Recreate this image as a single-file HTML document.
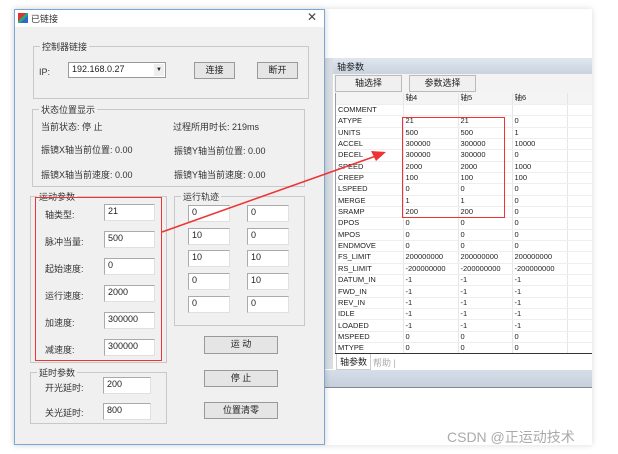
<!DOCTYPE html>
<html><head><meta charset="utf-8"><style>
*{margin:0;padding:0;box-sizing:border-box}
body{width:618px;height:454px;background:#fff;position:relative;overflow:hidden;font-family:"Liberation Sans","Noto Sans CJK SC",sans-serif;font-size:9px;color:#222}
.a{position:absolute}
.grp{position:absolute;border:1px solid #c8c8c8}
.grp span{position:absolute;top:-7px;left:6px;background:#f0f0f0;padding:0 2px;font-size:9px;color:#333}
.in{position:absolute;background:#fff;border:1px solid #aaa;border-right-color:#e0e0e0;border-bottom-color:#e0e0e0;font-size:9px;padding:1px 3px;height:17px}
.btn{position:absolute;background:#e5e5e5;border:1px solid #999;text-align:center;font-size:9px;line-height:15px}
.t{position:absolute;font-size:9px;color:#333;white-space:nowrap}
table{border-collapse:collapse}
td{height:11.35px;font-size:7.5px;padding:0 2px;border-right:1px solid #e6e6e6;border-bottom:1px solid #eee;white-space:nowrap;color:#222;line-height:10px}
</style></head><body>
<!-- right window -->
<div class="a" style="left:324px;top:9px;width:268px;height:436px;background:#fff;box-shadow:0 0 6px rgba(0,0,0,.15)"></div>
<div class="a" style="left:324px;top:58px;width:9px;height:311px;background:#d8dde4"></div>
<div class="a" style="left:333px;top:58px;width:259px;height:16px;background:linear-gradient(#dfe6ef,#c9d3df);font-size:9px;padding:2px 4px">轴参数</div>
<div class="a" style="left:334px;top:74px;width:258px;height:19px;background:#f3f3f3"></div>
<div class="btn" style="left:335px;top:75px;width:67px;height:17px;background:#f0f0f0;border-color:#bbb">轴选择</div>
<div class="btn" style="left:409px;top:75px;width:67px;height:17px;background:#f0f0f0;border-color:#bbb">参数选择</div>
<div class="a" style="left:335px;top:93px;width:257px;height:260px;overflow:hidden;border-left:1px solid #999">
<table style="width:300px">
<tr style="background:#f4f4f4"><td style="width:67px"></td><td style="width:55px">轴4</td><td style="width:54px">轴5</td><td style="width:55px">轴6</td><td></td></tr>
<tr><td>COMMENT</td><td></td><td></td><td></td><td></td></tr>
<tr><td>ATYPE</td><td>21</td><td>21</td><td>0</td><td></td></tr>
<tr><td>UNITS</td><td>500</td><td>500</td><td>1</td><td></td></tr>
<tr><td>ACCEL</td><td>300000</td><td>300000</td><td>10000</td><td></td></tr>
<tr><td>DECEL</td><td>300000</td><td>300000</td><td>0</td><td></td></tr>
<tr><td>SPEED</td><td>2000</td><td>2000</td><td>1000</td><td></td></tr>
<tr><td>CREEP</td><td>100</td><td>100</td><td>100</td><td></td></tr>
<tr><td>LSPEED</td><td>0</td><td>0</td><td>0</td><td></td></tr>
<tr><td>MERGE</td><td>1</td><td>1</td><td>0</td><td></td></tr>
<tr><td>SRAMP</td><td>200</td><td>200</td><td>0</td><td></td></tr>
<tr><td>DPOS</td><td>0</td><td>0</td><td>0</td><td></td></tr>
<tr><td>MPOS</td><td>0</td><td>0</td><td>0</td><td></td></tr>
<tr><td>ENDMOVE</td><td>0</td><td>0</td><td>0</td><td></td></tr>
<tr><td>FS_LIMIT</td><td>200000000</td><td>200000000</td><td>200000000</td><td></td></tr>
<tr><td>RS_LIMIT</td><td>-200000000</td><td>-200000000</td><td>-200000000</td><td></td></tr>
<tr><td>DATUM_IN</td><td>-1</td><td>-1</td><td>-1</td><td></td></tr>
<tr><td>FWD_IN</td><td>-1</td><td>-1</td><td>-1</td><td></td></tr>
<tr><td>REV_IN</td><td>-1</td><td>-1</td><td>-1</td><td></td></tr>
<tr><td>IDLE</td><td>-1</td><td>-1</td><td>-1</td><td></td></tr>
<tr><td>LOADED</td><td>-1</td><td>-1</td><td>-1</td><td></td></tr>
<tr><td>MSPEED</td><td>0</td><td>0</td><td>0</td><td></td></tr>
<tr><td>MTYPE</td><td>0</td><td>0</td><td>0</td><td></td></tr>
</table></div>
<div class="a" style="left:335px;top:353px;width:257px;height:1px;background:#333"></div>
<div class="a" style="left:336px;top:354px;font-size:9px;padding:1px 3px;background:#fff;border:1px solid #ccc;border-top:none">轴参数</div>
<div class="t" style="left:373px;top:356px;color:#aaa">帮助 |</div>
<div class="a" style="left:324px;top:370px;width:268px;height:18px;background:linear-gradient(#d5dde8,#c6d0dc);border-bottom:1px solid #888"></div>
<div class="a" style="left:402px;top:117px;width:103px;height:101px;border:1.5px solid #e33"></div>
<div class="t" style="left:447px;top:427px;font-size:14px;color:#aaa">CSDN @正运动技术</div>

<!-- dialog -->
<div class="a" style="left:14px;top:9px;width:311px;height:436px;background:#f0f0f0;border:1px solid #7aa7d6;box-shadow:0 0 6px rgba(0,0,0,.2)"></div>
<div class="a" style="left:15px;top:10px;width:309px;height:17px;background:#fff"></div>
<div class="a" style="left:18px;top:13px;width:10px;height:10px;background:linear-gradient(135deg,#d33 40%,#2a7 41%,#2a7 60%,#36c 61%)"></div>
<div class="t" style="left:31px;top:12px">已链接</div>
<div class="t" style="left:307px;top:10px;font-size:12px;color:#444">✕</div>

<div class="grp" style="left:33px;top:46px;width:276px;height:53px"><span>控制器链接</span></div>
<div class="t" style="left:39px;top:67px">IP:</div>
<div class="in" style="left:68px;top:62px;width:98px;height:16px;border:1px solid #999">192.168.0.27</div>
<div class="a" style="left:154px;top:64px;width:10px;height:12px;background:#eee;font-size:6px;text-align:center;line-height:12px">▼</div>
<div class="btn" style="left:194px;top:62px;width:41px;height:17px">连接</div>
<div class="btn" style="left:257px;top:62px;width:41px;height:17px">断开</div>

<div class="grp" style="left:32px;top:109px;width:273px;height:78px"><span>状态位置显示</span></div>
<div class="t" style="left:41px;top:120px">当前状态: 停 止</div>
<div class="t" style="left:173px;top:120px">过程所用时长: 219ms</div>
<div class="t" style="left:41px;top:143px">振镜X轴当前位置: 0.00</div>
<div class="t" style="left:174px;top:144px">振镜Y轴当前位置: 0.00</div>
<div class="t" style="left:41px;top:168px">振镜X轴当前速度: 0.00</div>
<div class="t" style="left:174px;top:168px">振镜Y轴当前速度: 0.00</div>

<div class="grp" style="left:30px;top:196px;width:137px;height:167px"><span>运动参数</span></div>
<div class="t" style="left:45px;top:208px">轴类型:</div><div class="in" style="left:104px;top:204px;width:51px">21</div>
<div class="t" style="left:45px;top:235px">脉冲当量:</div><div class="in" style="left:104px;top:231px;width:51px">500</div>
<div class="t" style="left:45px;top:262px">起始速度:</div><div class="in" style="left:104px;top:258px;width:51px">0</div>
<div class="t" style="left:45px;top:289px">运行速度:</div><div class="in" style="left:104px;top:285px;width:51px">2000</div>
<div class="t" style="left:45px;top:316px">加速度:</div><div class="in" style="left:104px;top:312px;width:51px">300000</div>
<div class="t" style="left:45px;top:343px">减速度:</div><div class="in" style="left:104px;top:339px;width:51px">300000</div>
<div class="a" style="left:35px;top:197px;width:127px;height:164px;border:1.5px solid #e33"></div>

<div class="grp" style="left:174px;top:196px;width:131px;height:130px"><span>运行轨迹</span></div>
<div class="in" style="left:188px;top:205px;width:42px">0</div><div class="in" style="left:247px;top:205px;width:42px">0</div>
<div class="in" style="left:188px;top:228px;width:42px">10</div><div class="in" style="left:247px;top:228px;width:42px">0</div>
<div class="in" style="left:188px;top:250px;width:42px">10</div><div class="in" style="left:247px;top:250px;width:42px">10</div>
<div class="in" style="left:188px;top:273px;width:42px">0</div><div class="in" style="left:247px;top:273px;width:42px">10</div>
<div class="in" style="left:188px;top:296px;width:42px">0</div><div class="in" style="left:247px;top:296px;width:42px">0</div>

<div class="btn" style="left:204px;top:336px;width:74px;height:18px">运 动</div>
<div class="btn" style="left:204px;top:370px;width:74px;height:17px">停 止</div>
<div class="btn" style="left:204px;top:402px;width:74px;height:17px">位置清零</div>

<div class="grp" style="left:30px;top:372px;width:137px;height:52px"><span>延时参数</span></div>
<div class="t" style="left:45px;top:381px">开光延时:</div><div class="in" style="left:103px;top:377px;width:48px">200</div>
<div class="t" style="left:45px;top:406px">关光延时:</div><div class="in" style="left:103px;top:403px;width:48px">800</div>

<svg class="a" style="left:0;top:0" width="618" height="454">
<line x1="162" y1="232" x2="376" y2="156" stroke="#e33" stroke-width="1.5"/>
<polygon points="386,152 371,151 376,161" fill="#e33"/>
</svg>
</body></html>
